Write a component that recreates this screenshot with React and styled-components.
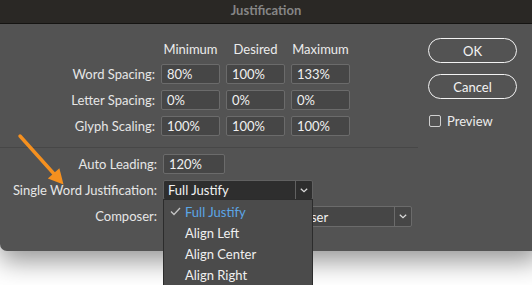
import React from "react";
import styled, { createGlobalStyle } from "styled-components";

const GlobalStyle = createGlobalStyle`
  html, body { margin: 0; padding: 0; background: #ffffff; overflow: hidden; }
  body { font-family: "Lato", "Open Sans", sans-serif; }
`;

const Stage = styled.div`
  position: relative;
  width: 532px;
  height: 285px;
  overflow: hidden;
  background: #ffffff;
`;

const Window = styled.div`
  width: 540px;
  height: 251px;
  display: flex;
  flex-direction: column;
  background: #535353;
  border-bottom-left-radius: 7px;
  box-shadow: 0 10px 26px rgba(0, 0, 0, 0.42);
`;

const TitleBar = styled.div`
  height: 24px;
  flex: none;
  box-sizing: border-box;
  padding-right: 8px;
  background: #2a2825;
  border-bottom: 1px solid #151412;
  color: #868686;
  font-weight: 700;
  font-size: 13px;
  line-height: 20px;
  text-align: center;
`;

const Body = styled.div`
  display: flex;
  flex: 1;
`;

const Main = styled.div`
  width: 418px;
  padding-top: 16px;
  display: flex;
  flex-direction: column;
`;

const SpacingGrid = styled.div`
  display: grid;
  grid-template-columns: 155px repeat(3, 59px);
  grid-template-rows: 18px repeat(3, 20px);
  column-gap: 6px;
  row-gap: 6px;
`;

const ColHead = styled.div`
  color: #ececec;
  font-size: 13px;
  text-align: center;
  align-self: center;
`;

const Label = styled.div`
  color: #e6e6e6;
  font-size: 13px;
  text-align: right;
  justify-self: end;
  align-self: center;
  white-space: nowrap;
`;

const Field = styled.div`
  box-sizing: border-box;
  height: 20px;
  width: ${(p) => (p.$w ? `${p.$w}px` : "auto")};
  display: flex;
  align-items: center;
  padding: 0 5px;
  background: #464646;
  border: 1px solid #6b6b6b;
  border-radius: 2px;
  color: #f0f0f0;
  font-size: 13px;
`;

const Divider = styled.div`
  height: 1px;
  margin-top: 11px;
  background: #474747;
`;

const OptionsGrid = styled.div`
  margin-top: 6px;
  display: grid;
  grid-template-columns: 157px auto;
  grid-auto-rows: 20px;
  column-gap: 6px;
  row-gap: 6px;
  justify-items: start;
`;

const SelectBox = styled.div`
  position: relative;
  box-sizing: border-box;
  height: ${(p) => p.$h || 20}px;
  width: ${(p) => p.$w}px;
  display: flex;
  background: ${(p) => (p.$dark ? "#2e2e2e" : "#464646")};
  border: 1px solid ${(p) => (p.$dark ? "#616161" : "#6b6b6b")};
  border-radius: 2px;
  color: #f2f2f2;
  font-size: 13px;
`;

const SelectText = styled.div`
  flex: 1;
  display: flex;
  align-items: center;
  padding-left: 4px;
  white-space: nowrap;
  overflow: hidden;
`;

const SelectArrow = styled.div`
  width: 16px;
  flex: none;
  display: flex;
  align-items: center;
  justify-content: center;
  border-left: 1px solid ${(p) => (p.$dark ? "#616161" : "#6b6b6b")};
`;

const Menu = styled.div`
  position: absolute;
  top: 100%;
  left: -1px;
  width: 150px;
  box-sizing: border-box;
  padding-top: 1px;
  background: #4b4b4b;
  border: 1px solid #2c2c2c;
  z-index: 5;
`;

const MenuItem = styled.div`
  position: relative;
  height: 21px;
  display: flex;
  align-items: center;
  padding-left: 21px;
  color: ${(p) => (p.$selected ? "#5ba6e6" : "#f0f0f0")};
  font-size: 13px;
`;

const CheckMark = styled.svg`
  position: absolute;
  left: 6px;
  top: 6px;
`;

const Side = styled.div`
  padding-top: 14px;
  padding-left: 10px;
  display: flex;
  flex-direction: column;
  gap: 11px;
`;

const PillButton = styled.div`
  box-sizing: border-box;
  width: 89px;
  height: 25px;
  border: 1.5px solid #f2f2f2;
  border-radius: 13px;
  display: flex;
  align-items: center;
  justify-content: center;
  color: #f4f4f4;
  font-size: 13px;
`;

const CheckRow = styled.div`
  margin-top: 3px;
  display: flex;
  align-items: center;
  gap: 6px;
  color: #ececec;
  font-size: 13px;
`;

const CheckBox = styled.div`
  box-sizing: border-box;
  width: 12px;
  height: 12px;
  margin-left: 1px;
  border: 1px solid #cfcfcf;
  border-radius: 2px;
`;

const ArrowOverlay = styled.svg`
  position: absolute;
  left: 0;
  top: 0;
  pointer-events: none;
`;

const Chevron = () => (
  <svg width="8" height="5" viewBox="0 0 8 5">
    <polyline points="0.8,0.8 4,3.8 7.2,0.8" fill="none" stroke="#dcdcdc" strokeWidth="1.2" />
  </svg>
);

const rows = [
  ["Word Spacing:", "80%", "100%", "133%"],
  ["Letter Spacing:", "0%", "0%", "0%"],
  ["Glyph Scaling:", "100%", "100%", "100%"],
];

const menuItems = ["Full Justify", "Align Left", "Align Center", "Align Right"];

export default function App() {
  return (
    <>
      <GlobalStyle />
      <Stage>
        <Window>
          <TitleBar>Justification</TitleBar>
          <Body>
            <Main>
              <SpacingGrid>
                <span />
                <ColHead>Minimum</ColHead>
                <ColHead>Desired</ColHead>
                <ColHead>Maximum</ColHead>
                {rows.map((r) => (
                  <React.Fragment key={r[0]}>
                    <Label>{r[0]}</Label>
                    <Field>{r[1]}</Field>
                    <Field>{r[2]}</Field>
                    <Field>{r[3]}</Field>
                  </React.Fragment>
                ))}
              </SpacingGrid>
              <Divider />
              <OptionsGrid>
                <Label>Auto Leading:</Label>
                <Field $w={62}>120%</Field>
                <Label>Single Word Justification:</Label>
                <SelectBox $w={150} $dark>
                  <SelectText>Full Justify</SelectText>
                  <SelectArrow $dark>
                    <Chevron />
                  </SelectArrow>
                  <Menu>
                    {menuItems.map((m, i) => (
                      <MenuItem key={m} $selected={i === 0}>
                        {i === 0 && (
                          <CheckMark width="11" height="9" viewBox="0 0 11 9">
                            <polyline points="1,4.5 4,7.5 10,1" fill="none" stroke="#c4c4c4" strokeWidth="1.3" />
                          </CheckMark>
                        )}
                        {m}
                      </MenuItem>
                    ))}
                  </Menu>
                </SelectBox>
                <Label>Composer:</Label>
                <SelectBox $w={249} $h={21}>
                  <SelectText>Adobe Paragraph Composer</SelectText>
                  <SelectArrow>
                    <Chevron />
                  </SelectArrow>
                </SelectBox>
              </OptionsGrid>
            </Main>
            <Side>
              <PillButton>OK</PillButton>
              <PillButton>Cancel</PillButton>
              <CheckRow>
                <CheckBox />
                Preview
              </CheckRow>
            </Side>
          </Body>
        </Window>
        <ArrowOverlay width="532" height="285" viewBox="0 0 532 285">
          <line x1="20" y1="136" x2="55" y2="175" stroke="#f5901f" strokeWidth="3.4" strokeLinecap="round" />
          <polygon points="63.5,184.5 47.8,178.6 59.4,168.2" fill="#f5901f" />
        </ArrowOverlay>
      </Stage>
    </>
  );
}
